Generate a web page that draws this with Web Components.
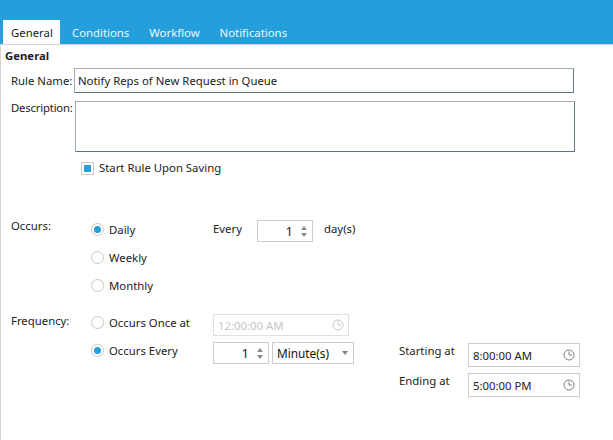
<!DOCTYPE html>
<html>
<head>
<meta charset="utf-8">
<title>Rule</title>
<style>
  html, body { margin: 0; height: 100%; background: #fff; }
  body { font: 11.35px "Noto Sans", "Open Sans", sans-serif; color: #222; overflow: hidden; }
</style>
</head>
<body>
<rule-editor></rule-editor>
<script>
const CLOCK = `<svg width="12" height="12" viewBox="0 0 12 12" fill="none" stroke="currentColor"><circle cx="6" cy="6" r="5"/><path d="M6 2.5V6H9"/></svg>`;

class RuleTabs extends HTMLElement {
  connectedCallback() {
    this.attachShadow({ mode: 'open' });
    const tabs = (this.getAttribute('tabs') || '').split(',');
    this.shadowRoot.innerHTML = `
      <style>
        :host { display: flex; height: 45px; box-sizing: border-box; padding: 20px 0 0 3px; background: #259fdc; border-bottom: 1px solid #d4d4d4; }
        .tab { padding: 4px 12px 0 8px; color: #fff; line-height: 17px; opacity: .92; }
        .tab.on { width: 57px; box-sizing: border-box; background: #fff; color: #222; opacity: 1; padding-right: 0; margin-right: 4px; }
      </style>
      ${tabs.map((t, i) => `<div class="tab ${i === 0 ? 'on' : ''}">${t}</div>`).join('')}
    `;
  }
}

class TextField extends HTMLElement {
  connectedCallback() {
    this.attachShadow({ mode: 'open' });
    this.shadowRoot.innerHTML = `
      <style>
        :host { display: block; box-sizing: border-box; background: #fff; border: 1px solid; border-color: #9fadb9 #64767f #5e717d #9fadb9; border-radius: 1px; padding: 3px 3px; line-height: 17px; color: #222; }
      </style>
      <slot></slot>
    `;
  }
}

class CheckBox extends HTMLElement {
  connectedCallback() {
    this.attachShadow({ mode: 'open' });
    this.shadowRoot.innerHTML = `
      <style>
        :host { display: flex; align-items: center; gap: 5px; line-height: 16px; }
        .box { width: 13px; height: 13px; box-sizing: border-box; border: 1px solid #ccc; padding: 2px; }
        .box i { display: block; width: 7px; height: 7px; background: #259fdc; }
      </style>
      <div class="box"><i></i></div><slot></slot>
    `;
  }
}

class RadioOption extends HTMLElement {
  connectedCallback() {
    this.attachShadow({ mode: 'open' });
    const on = this.hasAttribute('checked');
    this.shadowRoot.innerHTML = `
      <style>
        :host { display: flex; align-items: center; gap: 5px; line-height: 17px; height: 17px; }
        .dot { width: 13px; height: 13px; box-sizing: border-box; border: 1px solid #c8c8c8; border-radius: 50%; display: flex; align-items: center; justify-content: center; }
        .dot i { width: 7px; height: 7px; border-radius: 50%; background: #259fdc; }
      </style>
      <div class="dot">${on ? '<i></i>' : ''}</div><slot></slot>
    `;
  }
}

class SpinBox extends HTMLElement {
  connectedCallback() {
    this.attachShadow({ mode: 'open' });
    this.shadowRoot.innerHTML = `
      <style>
        :host { display: flex; align-items: center; justify-content: flex-end; box-sizing: border-box; width: 56px; height: 22px; border: 1px solid #ccc; padding-right: 5px; gap: 8px; font-size: 13px; color: #222; background: #fff; flex: none; }
        .arrows { display: flex; flex-direction: column; gap: 3px; }
        .arrows i { display: block; width: 0; height: 0; border: 3.5px solid transparent; border-top-width: 0; border-bottom: 4px solid #8a8a8a; }
        .arrows i + i { border-bottom-width: 0; border-top: 4px solid #8a8a8a; }
      </style>
      <slot></slot>
      <div class="arrows"><i></i><i></i></div>
    `;
  }
}

class TimeBox extends HTMLElement {
  connectedCallback() {
    this.attachShadow({ mode: 'open' });
    this.shadowRoot.innerHTML = `
      <style>
        :host { display: flex; align-items: center; justify-content: space-between; box-sizing: border-box; height: 24px; border: 1px solid #ccc; padding: 0 4px; color: #222; background: #fff; }
        :host([disabled]) { color: #c6c6c6; border-color: #e0e0e0; height: 22px; }
        .ico { display: flex; color: #808080; }
        :host([disabled]) .ico { color: #c6c6c6; }
      </style>
      <slot></slot>
      <div class="ico">${CLOCK}</div>
    `;
  }
}

class DropDown extends HTMLElement {
  connectedCallback() {
    this.attachShadow({ mode: 'open' });
    this.shadowRoot.innerHTML = `
      <style>
        :host { display: flex; align-items: center; justify-content: space-between; box-sizing: border-box; width: 82px; height: 22px; border: 1px solid #ccc; padding: 0 4px 0 4px; font-size: 11.8px; color: #111; background: #fff; flex: none; }
        i { width: 0; height: 0; border: 3px solid transparent; border-bottom-width: 0; border-top: 4px solid #808080; margin-right: 1px; }
      </style>
      <slot></slot><i></i>
    `;
  }
}

class RuleEditor extends HTMLElement {
  connectedCallback() {
    this.attachShadow({ mode: 'open' });
    this.shadowRoot.innerHTML = `
      <style>
        :host { display: block; height: 440px; }
        .body { border-left: 1px solid #d4d4d4; height: 395px; box-sizing: border-box; padding-left: 4px; }
        h2 { margin: 0; padding-top: 2px; font-size: inherit; font-weight: 700; line-height: 17px; color: #222; }
        label { white-space: nowrap; flex: none; }
        .row { display: flex; }
        .name { margin: 4px 0 0 6px; align-items: center; }
        .name label { width: 63px; }
        .name text-field { width: 500px; height: 25px; }
        .desc { margin: 8px 0 0 6px; }
        .desc label { width: 64px; margin-top: -1px; letter-spacing: -.2px; }
        .desc text-field { width: 500px; height: 51px; }
        check-box { margin: 8px 0 0 76px; }
        .occurs { margin: 42px 0 0 6px; }
        .side { width: 80px; flex: none; white-space: nowrap; }
        .radios { width: 122px; display: flex; flex-direction: column; gap: 11px; padding-top: 3px; flex: none; }
        .every { display: flex; align-items: flex-start; padding-top: 2px; }
        .every span { width: 44px; line-height: 17px; }
        .every b { font-weight: 400; margin-left: 11px; line-height: 17px; }
        .freq { margin: 18px 0 0 6px; }
        .freq .side { line-height: 17px; }
        .freq-body { display: flex; flex-direction: column; gap: 6px; padding-top: 2px; }
        .line { display: flex; align-items: flex-start; white-space: nowrap; }
        .line radio-option { width: 122px; flex: none; }
        .first time-box { width: 136px; }
        drop-down { margin-left: 3px; }
        .range { margin: 1px 0 0 45px; display: grid; grid-template-columns: 69px 112px; row-gap: 6px; }
        .range span { line-height: 15px; }
      </style>
      <rule-tabs tabs="General,Conditions,Workflow,Notifications"></rule-tabs>
      <div class="body">
        <h2>General</h2>
        <div class="row name"><label>Rule Name:</label><text-field>Notify Reps of New Request in Queue</text-field></div>
        <div class="row desc"><label>Description:</label><text-field></text-field></div>
        <check-box>Start Rule Upon Saving</check-box>
        <div class="row occurs">
          <div class="side">Occurs:</div>
          <div class="radios">
            <radio-option checked>Daily</radio-option>
            <radio-option>Weekly</radio-option>
            <radio-option>Monthly</radio-option>
          </div>
          <div class="every"><span>Every</span><spin-box>1</spin-box><b>day(s)</b></div>
        </div>
        <div class="row freq">
          <div class="side">Frequency:</div>
          <div class="freq-body">
            <div class="line first"><radio-option>Occurs Once at</radio-option><time-box disabled>12:00:00 AM</time-box></div>
            <div class="line">
              <radio-option checked>Occurs Every</radio-option>
              <spin-box>1</spin-box>
              <drop-down>Minute(s)</drop-down>
              <div class="range">
                <span>Starting at</span><time-box>8:00:00 AM</time-box>
                <span>Ending at</span><time-box>5:00:00 PM</time-box>
              </div>
            </div>
          </div>
        </div>
      </div>
    `;
  }
}

customElements.define('rule-tabs', RuleTabs);
customElements.define('text-field', TextField);
customElements.define('check-box', CheckBox);
customElements.define('radio-option', RadioOption);
customElements.define('spin-box', SpinBox);
customElements.define('time-box', TimeBox);
customElements.define('drop-down', DropDown);
customElements.define('rule-editor', RuleEditor);
</script>
</body>
</html>
